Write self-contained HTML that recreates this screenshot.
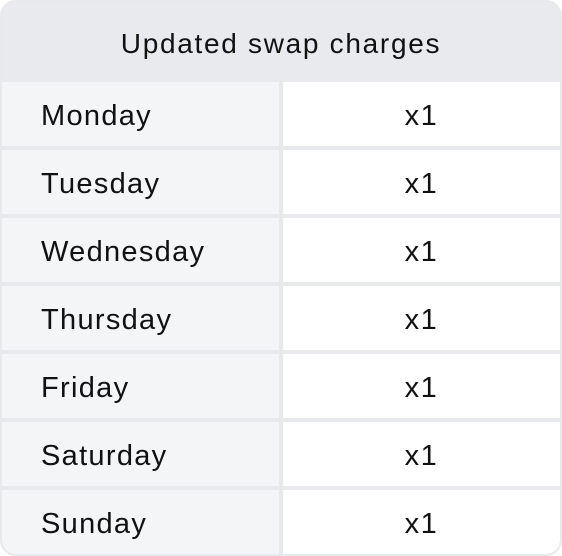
<!DOCTYPE html>
<html><head><style>
html,body{margin:0;padding:0;background:#fff;}
.t{position:absolute;left:0;top:0;width:558px;height:552px;border:2px solid #e8e9ec;border-radius:16px;background:#e8e9ec;overflow:hidden;font-family:"Liberation Sans",sans-serif;color:#111;}
.h{position:absolute;left:0;top:0;width:558px;height:80px;line-height:83px;text-align:center;font-size:28px;letter-spacing:1.7px;background:#e9eaee;}
.r{position:absolute;left:0;width:558px;height:64px;}
.l{position:absolute;left:0;top:0;width:277px;height:64px;background:#f4f5f7;line-height:68px;font-size:29px;letter-spacing:1.3px;padding-left:39px;box-sizing:border-box;}
.v{position:absolute;left:281px;top:0;width:277px;height:64px;background:#fff;line-height:68px;font-size:29px;letter-spacing:1.5px;text-align:center;}
</style></head><body>
<div class="t">
<div class="h">Updated swap charges</div>
<div class="r" style="top:80px"><div class="l">Monday</div><div class="v">x1</div></div>
<div class="r" style="top:148px"><div class="l">Tuesday</div><div class="v">x1</div></div>
<div class="r" style="top:216px"><div class="l">Wednesday</div><div class="v">x1</div></div>
<div class="r" style="top:284px"><div class="l">Thursday</div><div class="v">x1</div></div>
<div class="r" style="top:352px"><div class="l">Friday</div><div class="v">x1</div></div>
<div class="r" style="top:420px"><div class="l">Saturday</div><div class="v">x1</div></div>
<div class="r" style="top:488px"><div class="l">Sunday</div><div class="v">x1</div></div>
</div>
</body></html>
